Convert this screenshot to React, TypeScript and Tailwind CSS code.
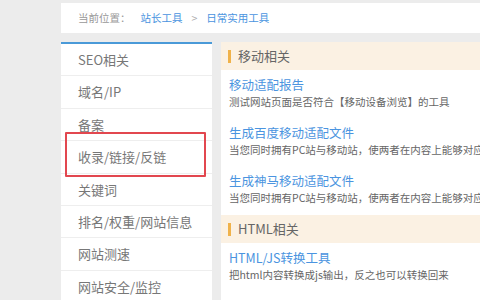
const menu = [
  "SEO相关",
  "域名/IP",
  "备案",
  "收录/链接/反链",
  "关键词",
  "排名/权重/网站信息",
  "网站测速",
  "网站安全/监控",
]

const mobileTools = [
  { title: "移动适配报告", desc: "测试网站页面是否符合【移动设备浏览】的工具" },
  { title: "生成百度移动适配文件", desc: "当您同时拥有PC站与移动站，使两者在内容上能够对应起来的工具" },
  { title: "生成神马移动适配文件", desc: "当您同时拥有PC站与移动站，使两者在内容上能够对应起来的工具" },
]

const htmlTools = [
  { title: "HTML/JS转换工具", desc: "把html内容转换成js输出，反之也可以转换回来" },
  { title: "HTML/UBB代码转换", desc: "HTML代码与UBB代码互相转换" },
]

function SectionHeader({ title }: { title: string }) {
  return (
    <div className="h-[28px] bg-[#fbf1e3] flex items-center pl-[7px]">
      <span className="w-[3px] h-[13px] bg-[#f0b24a] mr-[7px]" />
      <span className="text-[13px] text-[#666]">{title}</span>
    </div>
  )
}

function ToolItem({ title, desc }: { title: string; desc: string }) {
  return (
    <div className="h-[48px] pt-[6px] pl-[8px] whitespace-nowrap">
      <div className="text-[12.5px] leading-[18px] text-[#4a94e0]">{title}</div>
      <div className="text-[10.5px] leading-[16px] text-[#666]">{desc}</div>
    </div>
  )
}

export default function App() {
  return (
    <main
      className="w-[480px] h-[300px] overflow-hidden bg-[#ececec]"
      style={{ fontFamily: '"Noto Sans CJK SC", "Noto Sans", sans-serif' }}
    >
      {/* Breadcrumb */}
      <div className="ml-[61px] mt-[3px] h-[30px] bg-white flex items-center pl-[17px] text-[10.5px] whitespace-nowrap">
        <span className="text-[#999]">当前位置：</span>
        <span className="ml-[10px] text-[#4a94e0]">站长工具</span>
        <span className="mx-[9px] text-[#aaa]">&gt;</span>
        <span className="text-[#4a94e0]">日常实用工具</span>
      </div>

      <div className="flex mt-[9px] ml-[61px] gap-[9px]">
        {/* Sidebar */}
        <div className="relative w-[151px] shrink-0 bg-white border-t-2 border-[#4a9ad8]">
          {menu.map((item) => (
            <div
              key={item}
              className="h-[32.4px] flex items-center pl-[17px] border-b border-[#eee] text-[13px] text-[#777] whitespace-nowrap"
            >
              {item}
            </div>
          ))}
          <div className="absolute left-[4px] top-[88px] w-[141px] h-[45px] border-2 border-[#e2474f] rounded-[1px]" />
        </div>

        {/* Content */}
        <div className="flex-1 bg-white overflow-hidden">
          <SectionHeader title="移动相关" />
          {mobileTools.map((t) => (
            <ToolItem key={t.title} {...t} />
          ))}
          <div className="mt-[1px]">
            <SectionHeader title="HTML相关" />
          </div>
          {htmlTools.map((t) => (
            <ToolItem key={t.title} {...t} />
          ))}
        </div>
      </div>
    </main>
  )
}
